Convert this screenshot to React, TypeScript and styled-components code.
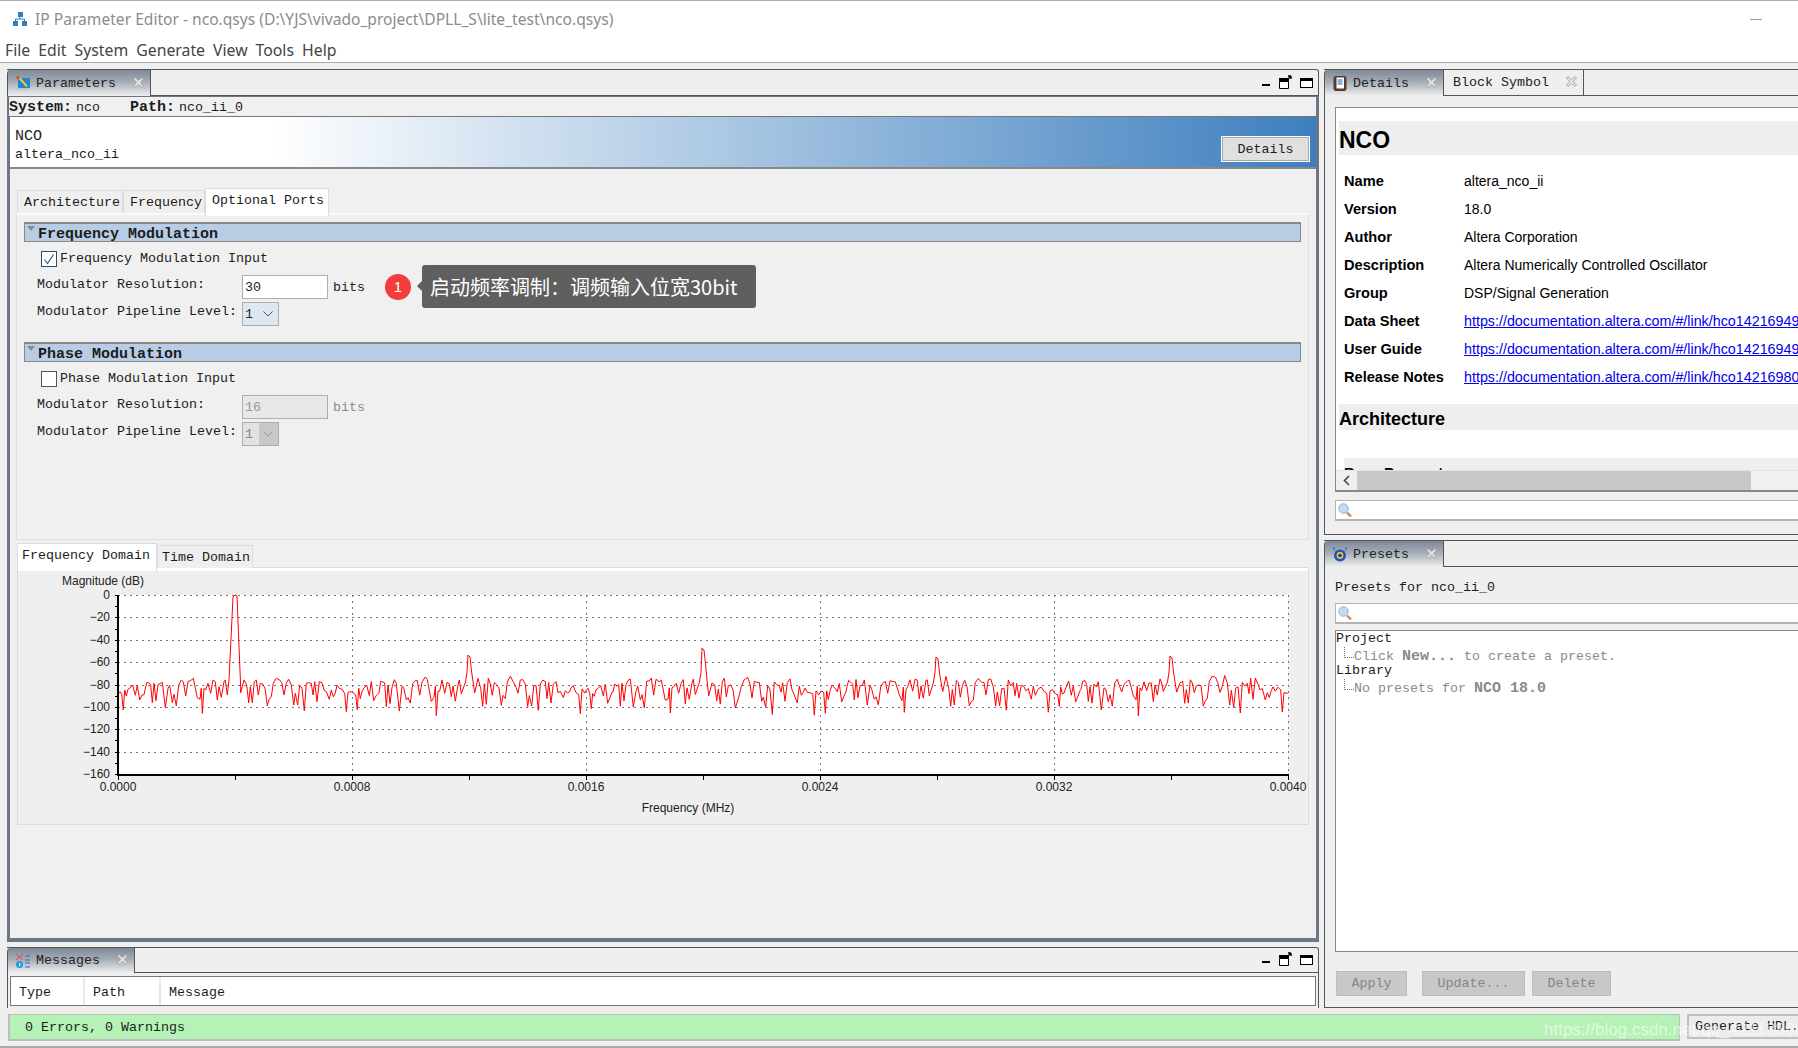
import React from "react";
import styled, { createGlobalStyle } from "styled-components";

const Global = createGlobalStyle`
  html, body { margin: 0; padding: 0; width: 1798px; height: 1048px; overflow: hidden; background: #efefef; }
  * { box-sizing: border-box; }
`;

const MONO = `"Liberation Mono", "DejaVu Sans Mono", monospace`;
const SANS = `"Liberation Sans", Arial, sans-serif`;
const UI = `"Noto Sans", "Open Sans", sans-serif`;

const Window = styled.div`
  position: relative;
  width: 1798px;
  height: 1048px;
  display: flex;
  flex-direction: column;
  background: #efefef;
  border-top: 1px solid #aaa;
  border-bottom: 2px solid #aaa;
  font-family: ${MONO};
  font-size: 13.33px;
  color: #1c1c1c;
  overflow: hidden;
`;
const TitleBar = styled.div`
  height: 37px;
  padding: 0 0 1px 13px;
  display: flex;
  align-items: center;
  gap: 8px;
  background: #fff;
  font-family: ${UI};
  font-size: 15.6px;
  color: #8c8c8c;
`;
const WinMin = styled.span`
  margin-left: auto;
  margin-right: 36px;
  width: 12px;
  height: 1px;
  background: #999;
`;
const MenuBar = styled.div`
  height: 25px;
  padding: 0 0 0 5px;
  display: flex;
  align-items: center;
  gap: 8px;
  background: #fff;
  border-bottom: 1px solid #aaa;
  font-family: ${UI};
  font-size: 15.8px;
  color: #444;
`;
const Main = styled.div`
  height: 945px;
  flex: none;
  padding: 6px 0 0 7px;
  display: grid;
  grid-template-columns: 1312px minmax(0, 1fr);
  gap: 5px;
`;
const Column = styled.div`
  display: flex;
  flex-direction: column;
  gap: 5px;
  min-width: 0;
  overflow: hidden;
`;
const Panel = styled.section<{ $h?: number }>`
  display: flex;
  flex-direction: column;
  min-height: 0;
  ${(p) => (p.$h ? `height: ${p.$h}px; flex: none;` : "flex: 1;")}
`;
const TabStrip = styled.div<{ $h?: number; $open?: boolean }>`
  height: ${(p) => p.$h ?? 27}px;
  flex: none;
  display: flex;
  align-items: stretch;
  border-top: 1px solid #555;
  border-bottom: 1px solid #555;
  border-right: ${(p) => (p.$open ? "none" : "1px solid #555")};
  border-top-right-radius: ${(p) => (p.$open ? "0" : "3px")};
`;
const DockTab = styled.div<{ $active?: boolean; $plain?: boolean }>`
  display: flex;
  align-items: center;
  padding: 0 7px 0 ${(p) => (p.$plain ? 9 : 8)}px;
  border-right: 1px solid #555;
  border-left: ${(p) => (p.$plain ? "none" : "1px solid #555")};
  margin-bottom: ${(p) => (p.$active ? "-1px" : "0")};
  border-top-left-radius: ${(p) => (p.$plain ? "0" : "4px")};
  background: ${(p) => (p.$active ? "linear-gradient(#7f8996, #a4acb6 45%, #efefef)" : "#efefef")};
  color: #222;
`;
const DockIcon = styled.svg`
  width: 16px;
  height: 16px;
  margin-right: 5px;
  margin-left: -1px;
  flex: none;
`;
const CloseIcon = styled.svg`
  width: 11px;
  height: 11px;
  margin: 0 -1px 2px 17px;
  flex: none;
`;
const Controls = styled.svg`
  margin-left: auto;
  margin-right: 3px;
  width: 54px;
  height: 16px;
  align-self: center;
  flex: none;
`;
const ActiveFrame = styled.div`
  flex: 1;
  min-height: 0;
  display: flex;
  flex-direction: column;
  border: 3px solid #6d7685;
  border-top-width: 1px;
  border-bottom-width: 4px;
  background: #f0f0f0;
`;
const SystemRow = styled.div`
  height: 20px;
  flex: none;
  display: flex;
  align-items: center;
  padding: 2px 0 0 0;
  margin-left: -1px;
  background: #f0f0f0;
  border-bottom: 1px solid #777;
`;
const Strong = styled.b`
  font-weight: 700;
  font-size: 15px;
`;
const SystemKey = styled(Strong)`
  margin-right: 4px;
`;
const PathPart = styled.span`
  margin-left: 30px;
`;
const Banner = styled.div`
  height: 52px;
  flex: none;
  display: flex;
  align-items: flex-end;
  justify-content: space-between;
  padding: 0 6px 5px 5px;
  background: linear-gradient(90deg, #fff 20%, #3d7fbf 100%);
  border-bottom: 2px solid #888;
`;
const BannerText = styled.div`
  margin-bottom: -2px;
`;
const BannerName = styled.div`
  font-size: 15px;
  line-height: 19px;
`;
const BannerKind = styled.div`
  line-height: 18px;
`;
const PlainButton = styled.div`
  width: 89px;
  height: 26px;
  display: flex;
  align-items: center;
  justify-content: center;
  background: #e0e0e0;
  border: 1px solid #fff;
  box-shadow: inset 0 0 0 1px #aaa;
  color: #222;
`;
const ParamsBody = styled.div`
  flex: 1;
  min-height: 0;
  display: flex;
  flex-direction: column;
  padding: 19px 7px 0 6px;
`;
const InnerTabs = styled.div<{ $h: number }>`
  height: ${(p) => p.$h}px;
  flex: none;
  display: flex;
  align-items: flex-start;
  padding-left: 1px;
`;
const InnerTab = styled.div<{ $active?: boolean; $w: number; $top: number; $pad?: number }>`
  width: ${(p) => p.$w}px;
  height: ${(p) => (p.$active ? 28 : 23)}px;
  margin-top: ${(p) => p.$top}px;
  padding: 0 0 0 ${(p) => p.$pad ?? 6}px;
  display: flex;
  align-items: center;
  white-space: nowrap;
  position: relative;
  z-index: 1;
  background: ${(p) => (p.$active ? "#fff" : "#efefef")};
  border: 1px solid #dcdcdc;
  border-bottom: none;
  padding-bottom: ${(p) => (p.$active ? "5px" : "0")};
`;
const ParamBox = styled.div`
  height: 327px;
  flex: none;
  padding: 7px 7px 0 7px;
  border: 1px solid #dedede;
  border-top: 2px solid #fafafa;
  background: #f0f0f0;
`;
const SectionHead = styled.div<{ $gap?: number }>`
  height: 20px;
  margin-top: ${(p) => p.$gap ?? 0}px;
  padding: 3px 0 0 13px;
  display: flex;
  align-items: center;
  position: relative;
  background: #b8cde4;
  border: 1px solid #888;
  border-top-width: 2px;
  font-size: 15px;
  font-weight: 700;
  &::before {
    content: "";
    position: absolute;
    left: 2px;
    top: 2px;
    border: 4px solid transparent;
    border-top: 5px solid #8a8a8a;
    border-bottom: none;
  }
`;
const CheckRow = styled.div`
  margin-top: 9px;
  padding-left: 17px;
  height: 15px;
  display: flex;
  align-items: center;
  gap: 3px;
`;
const CheckBox = styled.span<{ $on?: boolean }>`
  width: 16px;
  height: 16px;
  flex: none;
  display: flex;
  align-items: center;
  justify-content: center;
  background: #fff;
  border: 1px solid ${(p) => (p.$on ? "#1f4e79" : "#555")};
`;
const FormRow = styled.div<{ $gap: number }>`
  position: relative;
  height: 24px;
  margin-top: ${(p) => p.$gap}px;
  padding-left: 13px;
  display: flex;
  align-items: center;
`;
const FieldLabel = styled.span`
  width: 205px;
  flex: none;
  padding-bottom: 6px;
`;
const TextField = styled.div<{ $off?: boolean }>`
  width: 86px;
  height: 24px;
  padding-left: 2px;
  display: flex;
  align-items: center;
  background: ${(p) => (p.$off ? "#e8e8e8" : "#fff")};
  border: 1px solid #adadad;
  color: ${(p) => (p.$off ? "#999" : "#222")};
`;
const Unit = styled.span<{ $off?: boolean }>`
  margin-left: 5px;
  color: ${(p) => (p.$off ? "#8c8c8c" : "#222")};
`;
const Select = styled.div<{ $off?: boolean }>`
  width: 37px;
  height: 24px;
  display: flex;
  align-items: center;
  background: ${(p) => (p.$off ? "#c8c8c8" : "#dfe8f2")};
  border: 1px solid #adadad;
  color: ${(p) => (p.$off ? "#888" : "#222")};
`;
const SelectValue = styled.span<{ $off?: boolean }>`
  width: 16px;
  height: 100%;
  padding-left: 2px;
  display: flex;
  align-items: center;
  background: ${(p) => (p.$off ? "#e2e2e2" : "transparent")};
`;
const Chevron = styled.svg`
  width: 10px;
  height: 6px;
  margin-left: 4px;
`;
const Annotation = styled.div`
  position: absolute;
  left: 361px;
  top: -10px;
  height: 43px;
  display: flex;
  align-items: center;
  gap: 11px;
  font-family: "Noto Sans CJK SC", ${SANS};
`;
const Badge = styled.span`
  width: 26px;
  height: 26px;
  border-radius: 50%;
  display: flex;
  align-items: center;
  justify-content: center;
  background: #f53c3c;
  color: #fff;
  font-family: ${SANS};
  font-size: 15px;
`;
const Callout = styled.div`
  position: relative;
  width: 334px;
  height: 43px;
  padding-left: 8px;
  display: flex;
  align-items: center;
  background: #5f5f5f;
  border-radius: 3px;
  color: #fff;
  font-size: 20px;
  white-space: nowrap;
  &::before {
    content: "";
    position: absolute;
    left: -5px;
    top: 16px;
    border: 5px solid transparent;
    border-right-color: #5f5f5f;
    border-left: none;
  }
`;
const ChartBox = styled.div`
  height: 258px;
  flex: none;
  margin-left: 1px;
  border: 1px solid #dcdcdc;
  background: #efefef;
  box-shadow: inset 0 3px 0 #fff;
`;
const ChartSvg = styled.svg`
  display: block;
  font-family: ${SANS};
  font-size: 12px;
  fill: #222;
`;
const MessagesBody = styled.div`
  flex: 1;
  padding: 3px 2px 2px 2px;
  border: 1px solid #555;
  border-top: none;
`;
const MessagesTable = styled.div`
  height: 30px;
  display: grid;
  grid-template-columns: 74px 76px 1fr;
  background: #fff;
  border: 1px solid #777;
`;
const HeadCell = styled.div`
  padding: 2px 0 0 8px;
  display: flex;
  align-items: center;
  border-right: 2px solid #e8e8e8;
  &:last-child { border-right: none; }
`;
const DetailsBody = styled.div`
  flex: 1;
  min-height: 0;
  padding: 11px 0 0 10px;
  border-left: 1px solid #555;
  border-bottom: 1px solid #555;
`;
const DocBox = styled.div`
  width: calc(100% + 60px);
  height: 385px;
  display: flex;
  flex-direction: column;
  background: #fff;
  border: 1px solid #888;
  border-bottom-width: 2px;
`;
const DocScroll = styled.div`
  flex: 1;
  min-height: 0;
  overflow: hidden;
  padding: 13px 0 0 3px;
  font-family: ${SANS};
  font-size: 14px;
  color: #000;
`;
const DocH1 = styled.h1`
  margin: 0;
  height: 34px;
  padding: 5px 0 0 0;
  display: flex;
  align-items: center;
  background: #eee;
  font-size: 23px;
  font-weight: 700;
`;
const DocTable = styled.div`
  margin-top: 12px;
  padding-left: 5px;
  display: grid;
  grid-template-columns: 120px 1fr;
  grid-auto-rows: 28px;
  align-items: center;
  white-space: nowrap;
`;
const DocKey = styled.b`
  font-weight: 700;
  font-size: 14.6px;
`;
const DocLink = styled.a`
  color: #0000ee;
  font-size: 14.3px;
  text-decoration: underline;
`;
const DocH2 = styled.h2`
  margin: 13px 0 0;
  height: 26px;
  padding: 4px 0 0 0;
  display: flex;
  align-items: center;
  background: #eee;
  font-size: 18px;
  font-weight: 700;
`;
const DocH3 = styled.h3`
  margin: 28px 0 0 5px;
  height: 30px;
  padding: 6px 0 0 0;
  background: #eee;
  font-size: 15px;
  font-weight: 700;
`;
const HScroll = styled.div`
  height: 20px;
  flex: none;
  display: flex;
  align-items: stretch;
  background: #f0f0f0;
  border-top: 1px solid #e4e4e4;
`;
const ScrollArrow = styled.div`
  width: 21px;
  display: flex;
  align-items: center;
  justify-content: center;
`;
const ScrollThumb = styled.div`
  width: 394px;
  background: #c8c8c8;
`;
const SearchBox = styled.div<{ $gap: number }>`
  width: calc(100% + 60px);
  height: 21px;
  margin-top: ${(p) => p.$gap}px;
  padding: 1px 0 0 2px;
  display: flex;
  align-items: center;
  background: #fff;
  border: 1px solid #b4b4b4;
  border-bottom-width: 2px;
`;
const PresetsBody = styled.div`
  flex: 1;
  min-height: 0;
  padding: 13px 0 0 10px;
  border-left: 1px solid #555;
  border-bottom: 1px solid #555;
`;
const PresetsTitle = styled.div`
  height: 16px;
  line-height: 16px;
`;
const TreeBox = styled.div`
  width: calc(100% + 60px);
  height: 322px;
  margin-top: 6px;
  padding-top: 1px;
  background: #fff;
  border: 1px solid #888;
`;
const TreeParent = styled.div`
  height: 14px;
  line-height: 14px;
`;
const TreeChild = styled.div`
  position: relative;
  height: 14px;
  margin-top: 4px;
  padding-left: 18px;
  line-height: 14px;
  color: #8a8a8a;
  white-space: pre;
  &::before {
    content: "";
    position: absolute;
    left: 8px;
    top: -3px;
    width: 9px;
    height: 10px;
    border-left: 1px dotted #777;
    border-bottom: 1px dotted #777;
  }
`;
const ButtonRow = styled.div`
  margin-top: 19px;
  display: flex;
  padding-left: 1px;
`;
const DisabledButton = styled.div<{ $w: number; $gap: number }>`
  width: ${(p) => p.$w}px;
  height: 25px;
  margin-right: ${(p) => p.$gap}px;
  display: flex;
  align-items: center;
  justify-content: center;
  background: #c8c8c8;
  border: 1px solid #bdbdbd;
  color: #858585;
`;
const StatusRow = styled.div`
  height: 27px;
  flex: none;
  margin-top: 6px;
  padding-left: 8px;
  display: flex;
  gap: 7px;
`;
const StatusBar = styled.div`
  width: 1672px;
  flex: none;
  padding-left: 15px;
  display: flex;
  align-items: center;
  background: #b5f2b5;
  border: 2px solid #bdbdbd;
  border-right-width: 1px;
  border-top-width: 1px;
`;
const GenerateButton = styled.div`
  width: 124px;
  height: 25px;
  padding-left: 6px;
  flex: none;
  display: flex;
  align-items: center;
  white-space: nowrap;
  background: #ececec;
  border: 2px solid #c0c0c0;
  border-right: none;
`;
const Watermark = styled.div`
  position: absolute;
  left: 1544px;
  top: 1019px;
  font-family: ${SANS};
  font-size: 17px;
  line-height: 20px;
  color: rgba(255, 255, 255, 0.62);
  white-space: nowrap;
  pointer-events: none;
`;

const TRACE: [number, number][] = [
  [0,103],[6,95],[11,103],[16,150],[20,90],[25,108],[30,88],[36,84],[44,75],[52,106],[58,76],[65,120],[72,105],[78,104],[81,90],[86,68],[93,68],[98,75],[103,128],[108,70],[114,122],[120,74],[127,70],[133,67],[142,143],[150,85],[155,76],[163,128],[168,103],[175,137],[182,75],[190,60],[196,65],[203,108],[210,65],[220,60],[226,55],[238,113],[246,118],[250,85],[253,160],[258,85],[263,90],[270,70],[278,100],[285,60],[292,65],[298,120],[303,80],[310,112],[318,65],[322,60],[328,105],
];
const TRACE2: [number, number][] = [
  [368,98],[378,60],[386,75],[392,128],[397,80],[403,128],[409,65],[415,60],[421,105],[427,70],[434,72],[441,85],[448,137],[453,118],[460,110],[466,70],[475,55],[485,60],[492,70],[498,105],[505,70],[512,58],[520,75],[527,135],[532,100],[539,135],[545,76],[552,85],[559,152],[565,70],[572,68],[580,70],[585,105],[590,65],[597,125],[604,65],[612,68],[618,90],[625,95],[634,118],[640,90],[646,110],[652,100],[657,75],[664,85],[672,88],[680,100],[685,155],[690,97],[698,95],
];
const PEAK_TOPS = [595, 655, 648, 657, 656];

function jitter(i: number, k: number) {
  if (k === 0) return 0;
  const s = Math.sin(i * 12.9898 + k * 78.233) * 43758.5453;
  return (s - Math.floor(s)) * 8 - 4;
}

function buildTrace(): string {
  const pts: string[] = [];
  const add = (x: number, y: number) => pts.push(`${x.toFixed(1)},${y.toFixed(1)}`);
  for (let k = 0; k < 5; k++) {
    const off = 118 + 234 * k;
    TRACE.forEach(([zx, zy], i) => add(off + zx / 3, 660 + zy / 3 + jitter(i, k)));
    const p = off + 117;
    const top = PEAK_TOPS[k];
    if (k === 0) {
      add(229, 680); add(233, 597); add(235, 595); add(237, 596); add(240.7, 688);
    } else {
      add(p - 3.5, 682); add(p - 2, 672); add(p - 1, top); add(p + 1, top + 2); add(p + 2.5, top + 16); add(p + 4.5, 685);
    }
    TRACE2.forEach(([zx, zy], i) => add(off + zx / 3, 660 + zy / 3 + jitter(i + 60, k)));
  }
  add(1288, 693);
  return pts.join(" ");
}

const PLOT = { l: 118, r: 1288, t: 595, b: 774 };
const Y_LABELS = ["0", "−20", "−40", "−60", "−80", "−100", "−120", "−140", "−160"];

function Chart() {
  const stepY = (PLOT.b - PLOT.t) / 8;
  const stepX = (PLOT.r - PLOT.l) / 10;
  const trace = React.useMemo(buildTrace, []);
  return (
    <ChartSvg width={1291} height={256} viewBox="18 568 1291 256">
      <rect x={PLOT.l} y={PLOT.t} width={PLOT.r - PLOT.l} height={PLOT.b - PLOT.t} fill="#fff" />
      {Y_LABELS.map((_, i) => {
        const y = Math.round(PLOT.t + i * stepY) + 0.5;
        return i < 8 ? <line key={i} x1={PLOT.l} x2={PLOT.r} y1={y} y2={y} stroke="#777" strokeDasharray="2 4" /> : null;
      })}
      {[2, 4, 6, 8, 10].map((i) => {
        const x = Math.round(PLOT.l + i * stepX) + 0.5;
        return <line key={i} x1={x} x2={x} y1={PLOT.t} y2={PLOT.b} stroke="#777" strokeDasharray="2 4" />;
      })}
      <polyline points={trace} fill="none" stroke="#ff0000" strokeWidth={1} strokeLinejoin="round" />
      {Array.from({ length: 17 }, (_, i) => {
        const y = Math.round(PLOT.t + (i * stepY) / 2) + 0.5;
        return <line key={i} x1={PLOT.l - 3} x2={PLOT.l} y1={y} y2={y} stroke="#000" />;
      })}
      {Array.from({ length: 11 }, (_, i) => {
        const x = Math.round(PLOT.l + i * stepX) + 0.5;
        return <line key={i} x1={x} x2={x} y1={PLOT.b} y2={PLOT.b + 6} stroke="#000" />;
      })}
      <rect x={PLOT.l - 1} y={PLOT.t} width={2} height={PLOT.b - PLOT.t + 2} fill="#000" />
      <rect x={PLOT.l - 1} y={PLOT.b} width={PLOT.r - PLOT.l + 1} height={2} fill="#000" />
      <text x={62} y={585}>Magnitude (dB)</text>
      {Y_LABELS.map((t, i) => (
        <text key={t} x={110} y={PLOT.t + i * stepY + 4} textAnchor="end">{t}</text>
      ))}
      {["0.0000", "0.0008", "0.0016", "0.0024", "0.0032", "0.0040"].map((t, i) => (
        <text key={t} x={PLOT.l + i * stepX * 2} y={791} textAnchor="middle">{t}</text>
      ))}
      <text x={688} y={812} textAnchor="middle">Frequency (MHz)</text>
    </ChartSvg>
  );
}

const CloseGlyph = () => (
  <CloseIcon viewBox="0 0 11 11">
    <path d="M2 .5 5.5 3.6 9 .5 10.5 2 7.4 5.5 10.5 9 9 10.5 5.5 7.4 2 10.5.5 9 3.6 5.5.5 2Z" fill="#e4e4e4" stroke="#9a9a9a" strokeWidth=".8" />
  </CloseIcon>
);
const WindowControls = () => (
  <Controls viewBox="0 0 54 16">
    <rect x="1" y="9" width="8" height="2" fill="#000" />
    <path d="M18.5 6.5h9v7h-9z" fill="#fff" stroke="#000" />
    <rect x="18" y="3" width="10" height="3" fill="#000" />
    <path d="M27 4 30 1M30 1v3M30 1h-3" stroke="#000" strokeWidth="1.4" fill="none" />
    <rect x="39.5" y="3.5" width="12" height="9" fill="#fff" stroke="#000" />
    <rect x="39" y="3" width="13" height="3" fill="#000" />
  </Controls>
);
const ParamsIcon = () => (
  <DockIcon viewBox="0 0 16 16">
    <rect x="1" y="11" width="13" height="4" fill="#c4c4c4" />
    <rect x="3" y="3" width="12" height="10" fill="#1e88d0" />
    <path d="M3 3 11 12 13 11 5 2Z" fill="#f5c430" />
    <path d="M1 3 3 1 5 2 3 4Z" fill="#e03030" />
  </DockIcon>
);
const DetailsIcon = () => (
  <DockIcon viewBox="0 0 16 16">
    <rect x="1.5" y="1" width="13" height="15" rx="2.5" fill="#5a3a30" />
    <rect x="4.5" y="2.5" width="7.5" height="11" fill="#fff" />
    <path d="M5.5 5h5M5.5 7h5M5.5 9h5" stroke="#1e5fc0" />
  </DockIcon>
);
const PresetsIcon = () => (
  <DockIcon viewBox="0 0 16 16">
    <circle cx="8" cy="9.5" r="6" fill="#1a56b8" />
    <circle cx="8" cy="9.5" r="3.4" fill="#f0c040" />
    <circle cx="8" cy="9.5" r="1.8" fill="#1a3f90" />
    <rect x="1" y="1" width="2" height="3" fill="#4a78c8" />
    <rect x="13" y="1" width="2" height="3" fill="#4a78c8" />
  </DockIcon>
);
const MessagesIcon = () => (
  <DockIcon viewBox="0 0 16 16">
    <path d="M1 1 8 7M8 1 1 7" stroke="#e84040" strokeWidth="1" />
    <circle cx="4.5" cy="11.5" r="3.5" fill="#1e9be0" />
    <rect x="4" y="10" width="1.2" height="3.5" fill="#fff" />
    <path d="M10 3h5M10 7h5M10 10h5M10 14h5" stroke="#1e6fd0" />
  </DockIcon>
);
const AppIcon = () => (
  <svg width="14" height="14" viewBox="0 0 14 14">
    <rect x="5" y="0" width="5" height="5" fill="#2f7fc0" />
    <rect x="0" y="9" width="5" height="5" fill="#2f7fc0" />
    <rect x="9" y="9" width="5" height="5" fill="#2f7fc0" />
    <path d="M7 5v2M2.5 9V7h9v2" stroke="#2f7fc0" fill="none" />
  </svg>
);
const Magnifier = () => (
  <svg width="14" height="15" viewBox="0 0 14 15">
    <circle cx="5.5" cy="5.5" r="4.7" fill="#c4daf2" stroke="#8fb0d8" />
    <path d="M9 9.5 13 13.5" stroke="#c88c50" strokeWidth="2.4" />
  </svg>
);
const Check = () => (
  <svg width="14" height="14" viewBox="0 0 14 14">
    <path d="M2.5 7.5 5.5 11.5 11.5 2.5" fill="none" stroke="#1f5f99" strokeWidth="1.2" />
  </svg>
);
const SelectChevron = ({ off }: { off?: boolean }) => (
  <Chevron viewBox="0 0 10 6">
    <path d="M.5.5 5 5 9.5.5" fill="none" stroke={off ? "#999" : "#556"} />
  </Chevron>
);

const LINK_A = "https://documentation.altera.com/#/link/hco1421694979/hco1421694980";
const LINK_B = "https://documentation.altera.com/#/link/hco1421698042/hco1421698013";

export default function App() {
  return (
    <Window>
      <Global />
      <TitleBar>
        <AppIcon />
        <span>IP Parameter Editor - nco.qsys (D:\YJS\vivado_project\DPLL_S\lite_test\nco.qsys)</span>
        <WinMin />
      </TitleBar>
      <MenuBar>
        {["File", "Edit", "System", "Generate", "View", "Tools", "Help"].map((m) => (
          <span key={m}>{m}</span>
        ))}
      </MenuBar>
      <Main>
        <Column>
          <Panel>
            <TabStrip>
              <DockTab $active>
                <ParamsIcon />
                Parameters
                <CloseGlyph />
              </DockTab>
              <WindowControls />
            </TabStrip>
            <ActiveFrame>
              <SystemRow>
                <span><SystemKey>System:</SystemKey>nco</span>
                <PathPart><SystemKey>Path:</SystemKey>nco_ii_0</PathPart>
              </SystemRow>
              <Banner>
                <BannerText>
                  <BannerName>NCO</BannerName>
                  <BannerKind>altera_nco_ii</BannerKind>
                </BannerText>
                <PlainButton>Details</PlainButton>
              </Banner>
              <ParamsBody>
                <InnerTabs $h={25}>
                  <InnerTab $w={106} $top={2}>Architecture</InnerTab>
                  <InnerTab $w={82} $top={2}>Frequency</InnerTab>
                  <InnerTab $w={124} $top={0} $active>Optional Ports</InnerTab>
                </InnerTabs>
                <ParamBox>
                  <SectionHead>Frequency Modulation</SectionHead>
                  <CheckRow>
                    <CheckBox $on><Check /></CheckBox>
                    Frequency Modulation Input
                  </CheckRow>
                  <FormRow $gap={9}>
                    <FieldLabel>Modulator Resolution:</FieldLabel>
                    <TextField>30</TextField>
                    <Unit>bits</Unit>
                    <Annotation>
                      <Badge>1</Badge>
                      <Callout>启动频率调制：调频输入位宽30bit</Callout>
                    </Annotation>
                  </FormRow>
                  <FormRow $gap={3}>
                    <FieldLabel>Modulator Pipeline Level:</FieldLabel>
                    <Select>
                      <SelectValue>1</SelectValue>
                      <SelectChevron />
                    </Select>
                  </FormRow>
                  <SectionHead $gap={16}>Phase Modulation</SectionHead>
                  <CheckRow>
                    <CheckBox />
                    Phase Modulation Input
                  </CheckRow>
                  <FormRow $gap={9}>
                    <FieldLabel>Modulator Resolution:</FieldLabel>
                    <TextField $off>16</TextField>
                    <Unit $off>bits</Unit>
                  </FormRow>
                  <FormRow $gap={3}>
                    <FieldLabel>Modulator Pipeline Level:</FieldLabel>
                    <Select $off>
                      <SelectValue $off>1</SelectValue>
                      <SelectChevron off />
                    </Select>
                  </FormRow>
                </ParamBox>
                <InnerTabs $h={27}>
                  <InnerTab $w={140} $top={3} $pad={4} $active>Frequency Domain</InnerTab>
                  <InnerTab $w={96} $top={5} $pad={4}>Time Domain</InnerTab>
                </InnerTabs>
                <ChartBox>
                  <Chart />
                </ChartBox>
              </ParamsBody>
            </ActiveFrame>
          </Panel>
          <Panel $h={61}>
            <TabStrip $h={26}>
              <DockTab $active>
                <MessagesIcon />
                Messages
                <CloseGlyph />
              </DockTab>
              <WindowControls />
            </TabStrip>
            <MessagesBody>
              <MessagesTable>
                <HeadCell>Type</HeadCell>
                <HeadCell>Path</HeadCell>
                <HeadCell>Message</HeadCell>
              </MessagesTable>
            </MessagesBody>
          </Panel>
        </Column>
        <Column>
          <Panel $h={466}>
            <TabStrip $open>
              <DockTab $active>
                <DetailsIcon />
                Details
                <CloseGlyph />
              </DockTab>
              <DockTab $plain>
                Block Symbol
                <CloseGlyph />
              </DockTab>
            </TabStrip>
            <DetailsBody>
              <DocBox>
                <DocScroll>
                  <DocH1>NCO</DocH1>
                  <DocTable>
                    <DocKey>Name</DocKey><span>altera_nco_ii</span>
                    <DocKey>Version</DocKey><span>18.0</span>
                    <DocKey>Author</DocKey><span>Altera Corporation</span>
                    <DocKey>Description</DocKey><span>Altera Numerically Controlled Oscillator</span>
                    <DocKey>Group</DocKey><span>DSP/Signal Generation</span>
                    <DocKey>Data Sheet</DocKey><DocLink>{LINK_A}</DocLink>
                    <DocKey>User Guide</DocKey><DocLink>{LINK_A}</DocLink>
                    <DocKey>Release Notes</DocKey><DocLink>{LINK_B}</DocLink>
                  </DocTable>
                  <DocH2>Architecture</DocH2>
                  <DocH3>Base Parameters</DocH3>
                </DocScroll>
                <HScroll>
                  <ScrollArrow>
                    <svg width="7" height="11" viewBox="0 0 7 11">
                      <path d="M6 1 1.5 5.5 6 10" fill="none" stroke="#444" strokeWidth="1.6" />
                    </svg>
                  </ScrollArrow>
                  <ScrollThumb />
                </HScroll>
              </DocBox>
              <SearchBox $gap={8}><Magnifier /></SearchBox>
            </DetailsBody>
          </Panel>
          <Panel>
            <TabStrip $open>
              <DockTab $active>
                <PresetsIcon />
                Presets
                <CloseGlyph />
              </DockTab>
            </TabStrip>
            <PresetsBody>
              <PresetsTitle>Presets for nco_ii_0</PresetsTitle>
              <SearchBox $gap={7}><Magnifier /></SearchBox>
              <TreeBox>
                <TreeParent>Project</TreeParent>
                <TreeChild>Click <Strong>New...</Strong> to create a preset.</TreeChild>
                <TreeParent>Library</TreeParent>
                <TreeChild>No presets for <Strong>NCO 18.0</Strong></TreeChild>
              </TreeBox>
              <ButtonRow>
                <DisabledButton $w={71} $gap={15}>Apply</DisabledButton>
                <DisabledButton $w={103} $gap={7}>Update...</DisabledButton>
                <DisabledButton $w={79} $gap={0}>Delete</DisabledButton>
              </ButtonRow>
            </PresetsBody>
          </Panel>
        </Column>
      </Main>
      <StatusRow>
        <StatusBar>0 Errors, 0 Warnings</StatusBar>
        <GenerateButton>Generate HDL...</GenerateButton>
      </StatusRow>
      <Watermark>https://blog.csdn.net/qq_42118896</Watermark>
    </Window>
  );
}
